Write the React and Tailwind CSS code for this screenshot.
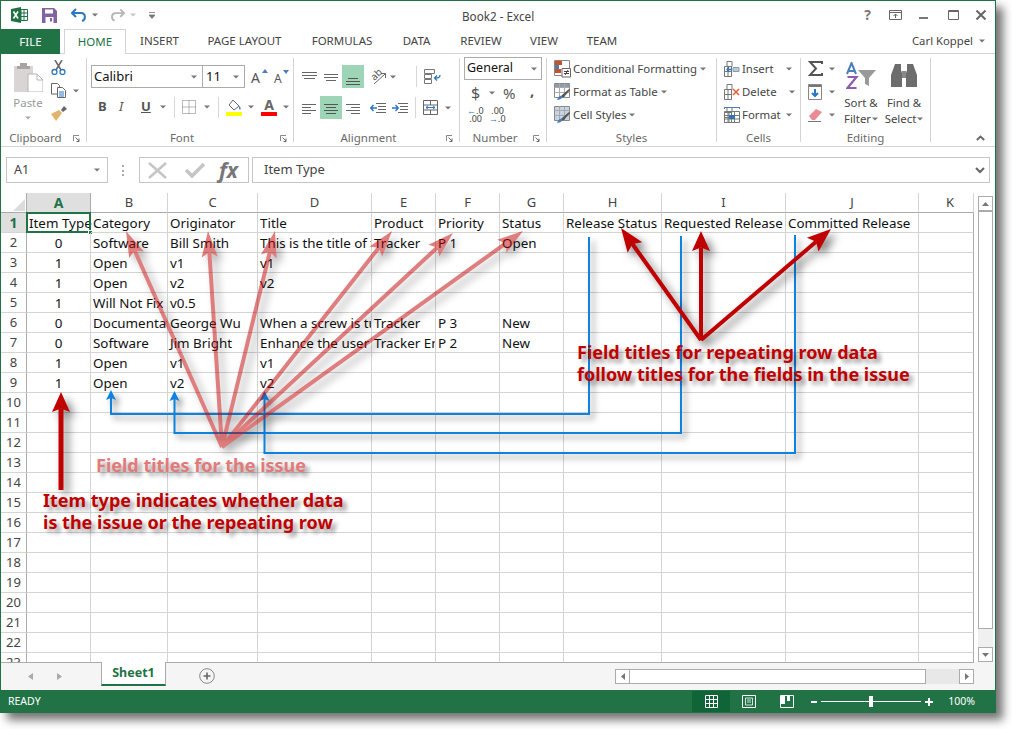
import React from "react";

const Caret = ({ c = "ml-[3px]", color = "#777" }) => (
  <svg width="6" height="4" viewBox="0 0 6 4" className={"shrink-0 " + c}><path d="M0 0.5h6L3 3.5z" fill={color} /></svg>
);
const Ico = ({ w = 16, h = 16, c = "", children }) => (
  <svg width={w} height={h} viewBox={`0 0 ${w} ${h}`} className={"shrink-0 " + c} fill="none">{children}</svg>
);
const Lines = ({ rows, w = 15, h = 15, c = "", color = "#666" }) => (
  <Ico w={w} h={h} c={c}>
    {rows.map(([x1, x2, y], i) => <path key={i} d={`M${x1} ${y}.5H${x2}`} stroke={color} />)}
  </Ico>
);
const Sep = ({ c = "" }) => <div className={"w-px h-[21px] bg-[#d8d8d8] shrink-0 " + c} />;

const Group = ({ w, label, launcher = true, children }) => (
  <div className={"flex flex-col h-[84px] my-[4px] border-r border-[#d4d4d4] shrink-0 " + w}>
    <div className="flex-1 min-h-0">{children}</div>
    <div className={"relative h-[16px] -mb-[4px] leading-[16px] text-[11.5px] text-[#6a6a6a] text-center " + (launcher ? "pr-[16px]" : "")}>
      {label}
      {launcher && (
        <svg width="7" height="7" viewBox="0 0 7 7" className="absolute right-[6px] top-[5px]" fill="none">
          <path d="M0.5 6V0.5H6" stroke="#888" /><path d="M2.5 2.5L6 6M6 3.5V6.5H3.5" stroke="#666" />
        </svg>
      )}
    </div>
  </div>
);

const StyleRow = ({ icon, text, caret = "ml-[3px]" }) => (
  <div className="h-[23px] flex items-center text-[11.4px] text-[#444] whitespace-nowrap">
    {icon}
    <span className="ml-[2px]">{text}</span>
    <Caret c={caret} />
  </div>
);

const CellIcon = ({ kind }) => (
  <Ico w={16} h={16}>
    <path d="M0.5 5.5h7v10h-7zM0.5 10.5h7M4 5.5v10M3 0.5h5v5H3z" stroke="#777" />
    {kind === "insert" && <><path d="M9 6.5h6v4H9z" fill="#b9c9dc" stroke="#8a9bb0" /><path d="M8 8.5H3M5 6L3 8.5 5 11" stroke="#2f75b5" strokeWidth="1.3" /></>}
    {kind === "delete" && <path d="M9 5l6 6M15 5l-6 6" stroke="#e2623a" strokeWidth="1.6" />}
    {kind === "format" && <><path d="M0.5 0.5h15M0.5 0v2M15.5 0v2" stroke="#4a7ebb" /><path d="M0.5 4.5h15v11h-15zM0.5 8.5h15M0.5 12h15M5 4.5v11M10.5 4.5v11" stroke="#777" /><path d="M5 8h6v4H5z" fill="#2f75b5" /></>}
  </Ico>
);

const StyleIcon = ({ kind }) => (
  <Ico w={17} h={18}>
    {kind === "cond" ? (
      <>
        <path d="M0.5 0.5h15v15h-15z" stroke="#888" fill="#fff" />
        <path d="M1 1h7v4H1z" fill="#c8502b" /><path d="M1 5h4v4H1z" fill="#4a7ebb" /><path d="M1 9h6v4H1z" fill="#c8502b" />
        <path d="M8 8.5h8.5v8.5H8z" fill="#fff" stroke="#666" /><path d="M10 11.5h5M10 13.5h5M14 10l-3 5" stroke="#444" />
      </>
    ) : (
      <>
        <path d="M0.5 0.5h15v14h-15z" stroke="#888" fill={kind === "table" ? "#fff" : "#c5d3e4"} />
        {kind === "table" && <path d="M1 1h14v3H1z" fill="#8c9db2" />}
        <path d="M0.5 4.5h15M0.5 9.5h15M5.5 0.5v14M10.5 0.5v14" stroke="#aaa" />
        <path d="M6 15l2-3 7-6 1 1-6 7z" fill="#555" /><path d="M3 17c1-3 3-5 5-4 1 1-1 4-5 4z" fill="#4a7ebb" />
      </>
    )}
  </Ico>
);

const cols = ["A", "B", "C", "D", "E", "F", "G", "H", "I", "J", "K"];
const data = {
  1: ["Item Type", "Category", "Originator", "Title", "Product", "Priority", "Status", "Release Status", "Requested Release", "Committed Release"],
  2: ["0", "Software", "Bill Smith", "This is the title of the issue", "Tracker", "P 1", "Open"],
  3: ["1", "Open", "v1", "v1"],
  4: ["1", "Open", "v2", "v2"],
  5: ["1", "Will Not Fix", "v0.5"],
  6: ["0", "Documentation", "George Wu", "When a screw is turned", "Tracker", "P 3", "New"],
  7: ["0", "Software", "Jim Bright", "Enhance the user interface", "Tracker Enhancements", "P 2", "New"],
  8: ["1", "Open", "v1", "v1"],
  9: ["1", "Open", "v2", "v2"],
};
const rows = Array.from({ length: 23 }, (_, i) => i + 1);
const gridCols = "grid grid-cols-[26px_64px_77px_90px_114px_64px_64px_64px_98px_124px_133px_55px] auto-rows-[20px] w-[973px]";

const Grid = () => (
  <div className={gridCols + " [font-family:'Lato',sans-serif]"}>
    <div className="border-r border-b border-[#ababab] bg-white flex items-end justify-end pr-[1px] pb-[1px]">
      <svg width="12" height="12" viewBox="0 0 12 12"><path d="M12 0v12H0z" fill="#dcdcdc" /></svg>
    </div>
    {cols.map((c, i) => (
      <div key={c} className={"flex items-center justify-center border-r border-b text-[13px] border-b-[#ababab] " + (c === "K" ? "pl-[8px] " : "") + (i === 0 ? "bg-[#dfdfdf] text-[#217346] font-bold border-r-[#ababab] text-[14px]" : "bg-white text-[#444] border-r-[#d4d4d4]")}>{c}</div>
    ))}
    {rows.map((r) => (
      <React.Fragment key={r}>
        <div className={"flex items-center justify-center border-r border-b border-r-[#ababab] border-b-[#d4d4d4] text-[13px] " + (r === 1 ? "bg-[#dfdfdf] text-[#217346] font-bold text-[14px]" : "bg-white text-[#444]")}>{r}</div>
        {cols.map((c, i) => {
          const v = data[r] && data[r][i];
          const last = i === cols.length - 1;
          return (
            <div key={c} className={"relative border-b border-[#d4d4d4] border-r whitespace-nowrap text-[13.4px] leading-[21px] text-[#111] " + (last ? "border-r-[#ababab] " : "") + (r === 1 && i === 0 ? "" : "overflow-hidden ") + (i === 0 && r > 1 ? "text-center" : "pl-[2px]")}>
              {v}
              {r === 1 && i === 0 && (
                <>
                  <div className="absolute -left-px -top-px -right-px -bottom-px border-2 border-[#217346]" />
                  <div className="absolute -right-[3px] -bottom-[3px] w-[5px] h-[5px] bg-[#217346] border border-white" />
                </>
              )}
            </div>
          );
        })}
      </React.Fragment>
    ))}
  </div>
);

const Arrow = ({ x1, y1, x2, y2, w = 4, hl = 24, hw = 8, color }) => {
  const a = Math.atan2(y2 - y1, x2 - x1);
  const ux = Math.cos(a), uy = Math.sin(a);
  const bx = x2 - ux * hl, by = y2 - uy * hl;
  const nx = x2 - ux * hl * 0.82, ny = y2 - uy * hl * 0.82;
  const p = [
    [x2, y2],
    [bx - uy * hw, by + ux * hw],
    [nx, ny],
    [bx + uy * hw, by - ux * hw],
  ].map((q) => q.join(",")).join(" ");
  return (
    <>
      <line x1={x1} y1={y1} x2={nx} y2={ny} stroke={color} strokeWidth={w} />
      <polygon points={p} fill={color} />
    </>
  );
};

const Connector = ({ d, tip }) => (
  <>
    <path d={d} fill="none" stroke="#0f82e0" strokeWidth="2" />
    <polygon points={`${tip[0]},${tip[1]} ${tip[0] - 5},${tip[1] + 10} ${tip[0]},${tip[1] + 8} ${tip[0] + 5},${tip[1] + 10}`} fill="#0f82e0" />
  </>
);

const Overlay = () => (
  <svg width="1012" height="729" viewBox="0 0 1012 729" className="absolute left-0 top-0 pointer-events-none">
    <g className="drop-shadow-[4px_4px_3px_rgba(0,0,0,0.45)]">
      <Connector d="M589 237V414H111V392" tip={[111, 390]} />
      <Connector d="M681 236V433H174.500V393" tip={[174.5, 391]} />
      <Connector d="M795 235V453H264.500V393" tip={[264.5, 391]} />
    </g>
    <g opacity="0.5" className="drop-shadow-[5px_5px_4px_rgba(0,0,0,0.6)]">
      {[[126, 231], [208, 231], [275, 231], [392, 231], [453, 233], [523, 231]].map(([x, y]) => (
        <Arrow key={x} x1={222} y1={447} x2={x} y2={y} w={4} hl={26} hw={8} color="#c00000" />
      ))}
    </g>
    <g className="drop-shadow-[5px_5px_4px_rgba(0,0,0,0.5)]">
      <Arrow x1={701} y1={340} x2={621} y2={228} w={4} hl={24} hw={9} color="#c00000" />
      <Arrow x1={701} y1={340} x2={701} y2={231} w={4} hl={20} hw={9} color="#c00000" />
      <Arrow x1={701} y1={340} x2={831} y2={229} w={4} hl={24} hw={9} color="#c00000" />
      <Arrow x1={61} y1={490} x2={61} y2={392} w={5} hl={20} hw={9} color="#c00000" />
    </g>
  </svg>
);

const Note = ({ c, children }) => (
  <div className={"absolute whitespace-nowrap [font-family:'Liberation_Sans',sans-serif] font-bold text-[18px] leading-[22px] [text-shadow:4px_4px_4px_rgba(0,0,0,0.4)] " + c}>{children}</div>
);

export default function App() {
  return (
    <div className="relative w-[1012px] h-[729px] bg-white overflow-hidden [font-family:'Open_Sans',sans-serif]">
      <div className="w-[996px] h-[713px] flex flex-col border-x border-t border-[#217346] bg-white shadow-[7px_7px_9px_rgba(0,0,0,0.55)]">
        {/* title bar */}
        <div className="h-[28px] flex items-center relative shrink-0">
          <svg width="17" height="16" viewBox="0 0 17 16" className="ml-[10px]">
            <path d="M0 2l10-2v16L0 14z" fill="#207245" />
            <path d="M10 2.500h6.500v11H10z" fill="#fff" stroke="#207245" />
            <path d="M10 6h6M10 9.500h6M13 3v10" stroke="#207245" />
            <path d="M2.500 4.500l4.500 7M7 4.500l-4.500 7" stroke="#fff" strokeWidth="1.600" />
          </svg>
          <svg width="15" height="15" viewBox="0 0 15 15" className="ml-[14px]">
            <path d="M0 0h12l3 3v12H0z" fill="#8064a2" />
            <path d="M3 1.500h8v4H3z" fill="#fff" /><path d="M3.500 9h8v6h-8z" fill="#fff" /><path d="M8 10h2v3.500H8z" fill="#8064a2" />
          </svg>
          <svg width="16" height="14" viewBox="0 0 16 14" className="ml-[14px]" fill="none">
            <path d="M5 1L1 5l4 4" stroke="#2b78c0" strokeWidth="2" /><path d="M1.500 5H10c5 0 5 7 1 8" stroke="#2b78c0" strokeWidth="2" />
          </svg>
          <Caret c="ml-[5px]" />
          <svg width="15" height="14" viewBox="0 0 16 14" className="ml-[12px]" fill="none">
            <path d="M11 1l4 4-4 4" stroke="#b5b5b5" strokeWidth="2" /><path d="M14.500 5H6c-5 0-5 7-1 8" stroke="#b5b5b5" strokeWidth="2" />
          </svg>
          <Caret c="ml-[5px]" color="#c5c5c5" />
          <svg width="6" height="7" viewBox="0 0 6 7" className="ml-[13px]"><path d="M0 .5h6M0 3h6L3 6.500z" stroke="#777" fill="#777" strokeWidth=".8" /></svg>
          <div className="absolute left-[461px] top-[6px] text-[11.7px] leading-[18px] text-[#444]">Book2 - Excel</div>
          <div className="ml-auto flex items-center">
            <span className="text-[14px] font-bold text-[#777] mr-[18px] leading-none">?</span>
            <svg width="13" height="10" viewBox="0 0 13 10" className="mr-[17px]" fill="none"><path d="M.5.5h12v9H.5zM.5 2.500h12" stroke="#666" /><path d="M6.500 8V4M4.500 6l2-2 2 2" stroke="#666" /></svg>
            <div className="w-[9px] h-[2px] bg-[#777] mr-[20px] mt-[5px]" />
            <svg width="11" height="10" viewBox="0 0 11 10" className="mr-[17px]" fill="none"><path d="M.5.5h10v9H.5z" stroke="#666" /><path d="M.5 1.500h10" stroke="#666" /></svg>
            <svg width="10" height="10" viewBox="0 0 10 10" className="mr-[9px]" fill="none"><path d="M.5.5l9 9M9.500.5l-9 9" stroke="#666" strokeWidth="2" /></svg>
          </div>
        </div>
        {/* tabs */}
        <div className="h-[25px] flex border-b border-[#d4d4d4] shrink-0 text-[11.5px] text-[#444]">
          <div className="w-[59px] h-[25px] bg-[#217346] text-white flex items-center justify-center">FILE</div>
          <div className="ml-[4px] w-[62px] h-[25px] bg-white border-x border-t border-[#d4d4d4] text-[#217346] flex items-center justify-center">HOME</div>
          {[["INSERT", "w-[37px] ml-[15px]"], ["PAGE LAYOUT", "w-[75px] ml-[29px]"], ["FORMULAS", "w-[62px] ml-[29px]"], ["DATA", "w-[29px] ml-[29px]"], ["REVIEW", "w-[40px] ml-[30px]"], ["VIEW", "w-[28px] ml-[29px]"], ["TEAM", "w-[32px] ml-[28px]"]].map(([t, c]) => (
            <div key={t} className={"flex items-center justify-center whitespace-nowrap " + c}>{t}</div>
          ))}
          <div className="ml-auto flex items-center mr-[10px] text-[11.3px]">
            <span>Carl Koppel</span><Caret c="ml-[6px]" />
          </div>
        </div>
        {/* ribbon */}
        <div className="h-[93px] flex border-b border-[#d4d4d4] shrink-0">
          <Group w="w-[86px]" label="Clipboard">
            <div className="flex pl-[11px]">
              <div className="w-[32px] flex flex-col items-center">
                <svg width="30" height="30" viewBox="0 0 30 30" className="mt-[4px]">
                  <path d="M1 4h19v26H1z" fill="#d9d5d5" /><path d="M7 1h7v3h3v3H4V4h3z" fill="#a8a4a4" />
                  <path d="M15 12h9l6 6v12H15z" fill="#fff" stroke="#b5b5b5" /><path d="M24 12v6h6" fill="none" stroke="#b5b5b5" />
                </svg>
                <div className="text-[11.4px] text-[#999] leading-[14px] mt-[4px]">Paste</div>
                <Caret c="mt-[6px]" color="#aaa" />
              </div>
              <div className="ml-[7px] flex flex-col">
                <Ico w={15} h={15} c="mt-[2px]"><path d="M4 0l6 10M11 0L5 10" stroke="#666" strokeWidth="1.500" /><circle cx="3.500" cy="12" r="2.500" stroke="#2b78c0" strokeWidth="1.300" /><circle cx="11.500" cy="12" r="2.500" stroke="#2b78c0" strokeWidth="1.300" /></Ico>
                <div className="flex items-center mt-[8px]">
                  <Ico w={16} h={15}><path d="M.5.5h6l2 2V11H.5z" stroke="#666" fill="#fff" /><path d="M6.500 4.500h5l3 3v7h-8z" stroke="#666" fill="#fff" /><path d="M8 9h5M8 11h5M8 13h5" stroke="#2b78c0" /></Ico>
                  <Caret c="ml-[6px]" />
                </div>
                <Ico w={16} h={15} c="mt-[8px]"><path d="M10 4l3-4 3 3-4 3z" fill="#666" /><path d="M0 8l5 7 6-8-3-3z" fill="#e2b36b" /></Ico>
              </div>
            </div>
          </Group>
          <Group w="w-[207px]" label="Font">
            <div className="pl-[4px] pt-[7px]">
              <div className="flex h-[23px] items-center">
                <div className="w-[112px] h-[23px] border border-[#ababab] flex items-center pl-[2px] pr-[5px] justify-between text-[13px] [font-family:'Lato',sans-serif] text-[#111]">Calibri<Caret /></div>
                <div className="w-[43px] h-[23px] -ml-px border border-[#ababab] flex items-center pl-[3px] pr-[5px] justify-between text-[13px] [font-family:'Lato',sans-serif] text-[#111]">11<Caret /></div>
                <div className="relative ml-[6px] w-[14px] text-[14px] text-[#555] leading-none mt-[3px]">A<svg width="6" height="4" className="absolute -right-[3px] -top-[2px]"><path d="M0 4h6L3 0z" fill="#4a7ebb" /></svg></div>
                <div className="relative ml-[9px] w-[12px] text-[12px] text-[#555] leading-none mt-[5px]">A<svg width="6" height="4" className="absolute -right-[3px] -top-[3px]"><path d="M0 0h6L3 4z" fill="#4a7ebb" /></svg></div>
              </div>
              <div className="flex items-center h-[20px] mt-[9px] text-[#555] text-[13px]">
                <span className="ml-[7px] w-[10px] font-bold [font-family:'Liberation_Sans',sans-serif]">B</span>
                <span className="ml-[11px] w-[10px] italic [font-family:'Liberation_Serif',serif]">I</span>
                <span className="ml-[12px] w-[10px] underline font-bold [font-family:'Liberation_Sans',sans-serif]">U</span>
                <Caret c="ml-[9px]" />
                <Sep c="ml-[8px]" />
                <Ico w={14} h={14} c="ml-[7px]"><path d="M.5.5h13v13H.5zM.5 7h13M7 .5v13" stroke="#777" strokeDasharray="1 1" /></Ico>
                <Caret c="ml-[8px]" />
                <Sep c="ml-[8px]" />
                <div className="ml-[7px] w-[16px] flex flex-col items-center">
                  <Ico w={14} h={12}><path d="M6 1l6 6-5 4-5-5z" stroke="#666" fill="#fff" /><path d="M12 7c2 1 2 3 1 4-1-1-1-2-1-4z" fill="#2b78c0" /></Ico>
                  <div className="w-[16px] h-[4px] bg-[#ffff00] mt-[1px]" />
                </div>
                <Caret c="ml-[6px]" />
                <div className="ml-[7px] w-[16px] flex flex-col items-center">
                  <span className="text-[14px] leading-[12px] text-[#666] font-bold [font-family:'Liberation_Sans',sans-serif]">A</span>
                  <div className="w-[16px] h-[4px] bg-[#ff0000] mt-[1px]" />
                </div>
                <Caret c="ml-[6px]" />
              </div>
            </div>
          </Group>
          <Group w="w-[166px]" label="Alignment">
            <div className="pl-[8px] pt-[7px]">
              <div className="flex items-center h-[23px]">
                <Lines rows={[[0, 15, 3], [0, 15, 6], [2, 13, 9]]} />
                <Lines c="ml-[7px]" w={14} rows={[[0, 14, 5], [0, 14, 8], [2, 12, 11]]} />
                <div className="ml-[4px] w-[22px] h-[23px] bg-[#9fd5b7] flex items-end justify-center pb-[3px]"><Lines w={14} h={8} rows={[[2, 12, 1], [0, 14, 4], [0, 14, 7]]} color="#555" /></div>
                <div className="relative w-[16px] h-[16px] ml-[6px] shrink-0">
                  <span className="absolute left-0 top-[-1px] text-[10px] leading-[12px] text-[#555] -rotate-45">ab</span>
                  <svg width="16" height="16" viewBox="0 0 16 16" className="absolute left-0 top-0" fill="none"><path d="M4 15L15 5M11 4.500h4.500V9" stroke="#666" /></svg>
                </div>
                <Caret c="ml-[4px]" />
                <Sep c="ml-[20px]" />
                <Ico w={17} h={16} c="ml-[7px]"><path d="M.5.500h10v4h-10zM.5 5.500h7v4h-7zM.5 10.500h7v4h-7z" stroke="#777" /><path d="M16 6c0 3-2 3-5 3M13 6.500L10.500 9l2.500 2.500" stroke="#2b78c0" strokeWidth="1.300" /></Ico>
              </div>
              <div className="flex items-center h-[23px] mt-[8px]">
                <Lines w={14} h={12} rows={[[0, 14, 2], [0, 9, 5], [0, 14, 8], [0, 9, 11]]} />
                <div className="ml-[4px] w-[22px] h-[23px] bg-[#9fd5b7] flex items-center justify-center"><Lines w={14} h={12} color="#555" rows={[[0, 14, 2], [2, 12, 5], [0, 14, 8], [2, 12, 11]]} /></div>
                <Lines c="ml-[4px]" w={14} h={12} rows={[[0, 14, 2], [5, 14, 5], [0, 14, 8], [5, 14, 11]]} />
                <Ico w={16} h={12} c="ml-[10px]"><path d="M6 1.500h10M8 4.500h8M8 7.500h8M6 10.500h10" stroke="#666" /><path d="M7 6H1M3.500 3L.8 6l2.700 3" stroke="#2b78c0" strokeWidth="1.400" /></Ico>
                <Ico w={16} h={12} c="ml-[6px]"><path d="M6 1.500h10M8 4.500h8M8 7.500h8M6 10.500h10" stroke="#666" /><path d="M0 6h6M3.500 3l2.700 3-2.700 3" stroke="#2b78c0" strokeWidth="1.400" /></Ico>
                <Sep c="ml-[7px]" />
                <Ico w={15} h={15} c="ml-[7px]"><path d="M.5.5h14v14H.5zM.5 5h14M.5 10h14M7.500.5V5M7.500 10v4.500" stroke="#666" /><path d="M3 7.500h9M5 5.800L3 7.500l2 1.700M10 5.800l2 1.700-2 1.700" stroke="#2b78c0" /></Ico>
                <Caret c="ml-[7px]" />
              </div>
            </div>
          </Group>
          <Group w="w-[87px]" label="Number">
            <div className="pl-[4px] -mt-px">
              <div className="w-[78px] h-[23px] border border-[#ababab] flex items-center justify-between pl-[2px] pr-[4px] text-[12.5px] [font-family:'Lato',sans-serif] text-[#111]">General<Caret /></div>
              <div className="flex items-center h-[20px] mt-[3px] text-[#555]">
                <span className="ml-[7px] w-[10px] text-[16px] leading-none">$</span>
                <Caret c="ml-[8px]" />
                <span className="ml-[8px] w-[14px] text-[15px] leading-none">%</span>
                <span className="ml-[13px] text-[15px] font-bold leading-none -mt-[5px]">,</span>
              </div>
              <div className="flex mt-[4px] ml-[3px] text-[9px] leading-[8px] text-[#444] [font-family:'Liberation_Sans',sans-serif]">
                <div className="w-[15px] text-right whitespace-nowrap"><span className="text-[#2b78c0]">←</span>.0<br />.00</div>
                <div className="w-[15px] ml-[7px] text-right whitespace-nowrap">.00<br /><span className="text-[#2b78c0]">→</span>.0</div>
              </div>
            </div>
          </Group>
          <Group w="w-[170px]" label="Styles" launcher={false}>
            <div className="pl-[7px] -mt-px">
              <StyleRow icon={<StyleIcon kind="cond" />} text="Conditional Formatting" />
              <StyleRow icon={<StyleIcon kind="table" />} text="Format as Table" />
              <StyleRow icon={<StyleIcon kind="cell" />} text="Cell Styles" />
            </div>
          </Group>
          <Group w="w-[84px]" label="Cells" launcher={false}>
            <div className="pl-[7px] -mt-px">
              <StyleRow icon={<CellIcon kind="insert" />} text="Insert" caret="ml-[12px]" />
              <StyleRow icon={<CellIcon kind="delete" />} text="Delete" caret="ml-[12px]" />
              <StyleRow icon={<CellIcon kind="format" />} text="Format" caret="ml-[5px]" />
            </div>
          </Group>
          <Group w="w-[130px]" label="Editing" launcher={false}>
            <div className="flex pl-[7px]">
              <div className="w-[30px] -mt-px">
                <div className="h-[23px] flex items-center">
                  <Ico w={15} h={15}><path d="M14 3V1H2l6 6.500L2 14h12v-2" stroke="#555" strokeWidth="2" /></Ico>
                  <Caret c="ml-[6px]" />
                </div>
                <div className="h-[23px] flex items-center">
                  <Ico w={14} h={16}><path d="M.5.5h13v15H.5z" stroke="#888" fill="#fff" /><path d="M1 1h12v2H1z" fill="#777" /><path d="M7 5v7M4 9l3 3 3-3" stroke="#2b78c0" strokeWidth="2" /></Ico>
                  <Caret c="ml-[7px]" />
                </div>
                <div className="h-[23px] flex items-center">
                  <Ico w={15} h={14}><path d="M1 8l7-7 6 3-7 8H4z" fill="#ea8a95" /><path d="M0 13.500h13" stroke="#777" /></Ico>
                  <Caret c="ml-[6px]" />
                </div>
              </div>
              <div className="w-[34px] ml-[6px] flex flex-col items-center text-[11.4px] text-[#444] leading-[16px] whitespace-nowrap">
                <svg width="31" height="28" viewBox="0 0 31 28" className="mt-[4px] shrink-0" fill="none">
                  <path d="M1 12L5.500 1 10 12M2.500 9h6" stroke="#4a7ebb" strokeWidth="2" />
                  <path d="M1.500 15h9l-9 11h9" stroke="#8e5db0" strokeWidth="2.200" />
                  <path d="M12 8h18l-7 8v8l-4-2v-6z" fill="#999" />
                </svg>
                <div className="mt-[5px]">Sort &amp;</div>
                <div className="flex items-center">Filter<Caret c="ml-[1px]" /></div>
              </div>
              <div className="w-[36px] ml-[8px] flex flex-col items-center text-[11.4px] text-[#444] leading-[16px] whitespace-nowrap">
                <svg width="26" height="23" viewBox="0 0 26 23" className="mt-[6px] shrink-0">
                  <path d="M4 0h6v6l1 3v14H0V11zM16 0h6l4 11v12H15V9l1-3z" fill="#6d6d6d" /><path d="M11 7h4v7h-4z" fill="#8a8a8a" />
                </svg>
                <div className="mt-[8px]">Find &amp;</div>
                <div className="flex items-center">Select<Caret c="ml-[1px]" /></div>
              </div>
            </div>
          </Group>
          <div className="flex-1 flex justify-end items-end pr-[10px] pb-[5px]">
            <svg width="9" height="6" viewBox="0 0 9 6" fill="none"><path d="M.8 5L4.500 1.500 8.200 5" stroke="#666" strokeWidth="1.800" /></svg>
          </div>
        </div>
        {/* formula bar */}
        <div className="h-[46px] shrink-0 flex items-center pl-[5px] pr-[5px]">
          <div className="w-[102px] h-[26px] border border-[#c6c6c6] flex items-center justify-between pl-[7px] pr-[7px] text-[12.5px] text-[#444]">A1<Caret color="#777" /></div>
          <div className="w-[2px] h-[11px] ml-[14px] border-l-2 border-dotted border-[#aaa]" />
          <div className="w-[110px] h-[26px] ml-[15px] border border-[#c6c6c6] flex items-center">
            <svg width="19" height="17" viewBox="0 0 19 17" className="ml-[8px]" fill="none"><path d="M1 1l17 15M18 1L1 16" stroke="#c5c5c5" strokeWidth="2.500" /></svg>
            <svg width="20" height="16" viewBox="0 0 20 16" className="ml-[18px]" fill="none"><path d="M1 8l6 6L19 2" stroke="#c5c5c5" strokeWidth="3.500" /></svg>
            <span className="ml-[14px] text-[21px] italic font-bold leading-none [font-family:'Liberation_Serif',serif] text-[#777]">fx</span>
          </div>
          <div className="flex-1 h-[26px] ml-[3px] border border-[#c6c6c6] flex items-center justify-between pl-[11px] pr-[4px] text-[13px] text-[#444]">
            <span>Item Type</span>
            <svg width="10" height="7" viewBox="0 0 10 7" fill="none"><path d="M1 1l4 4 4-4" stroke="#666" strokeWidth="2" /></svg>
          </div>
        </div>
        {/* sheet */}
        <div className="h-[469px] shrink-0 flex overflow-hidden">
          <Grid />
          <div className="w-[15px] ml-[4px] mt-[3px] flex flex-col h-[466px]">
            <div className="h-[15px] border border-[#ababab] flex items-center justify-center shrink-0"><svg width="7" height="4"><path d="M0 4h7L3.500 0z" fill="#777" /></svg></div>
            <div className="h-[418px] border border-t-[#ababab] border-x-[#ababab] border-b-[#ababab] bg-white shrink-0" />
            <div className="flex-1 bg-[#f0f0f0]" />
            <div className="h-[15px] border border-[#ababab] flex items-center justify-center shrink-0"><svg width="7" height="4"><path d="M0 0h7L3.500 4z" fill="#777" /></svg></div>
          </div>
        </div>
        {/* sheet tabs */}
        <div className="h-[28px] shrink-0 flex bg-[#f5f5f5]">
          <div className="w-[100px] h-[28px] border-t border-[#ababab] flex items-center pl-[27px] shrink-0">
            <svg width="5" height="7"><path d="M5 0v7L0 3.500z" fill="#aaa" /></svg>
            <svg width="5" height="7" className="ml-[24px]"><path d="M0 0v7l5-3.500z" fill="#aaa" /></svg>
          </div>
          <div className="w-[65px] h-[24px] bg-white border-x border-b-2 border-x-[#ababab] border-b-[#217346] flex items-center justify-center text-[12.5px] font-bold text-[#217346] [font-family:'Lato',sans-serif] shrink-0">Sheet1</div>
          <div className="w-[449px] border-t border-[#ababab] shrink-0 pl-[33px] pt-[5px]">
            <svg width="16" height="16" viewBox="0 0 16 16" fill="none"><circle cx="8" cy="8" r="7.300" stroke="#888" /><path d="M8 4.500v7M4.500 8h7" stroke="#666" strokeWidth="1.600" /></svg>
          </div>
          <div className="w-[359px] h-[28px] border-t border-[#ababab] pt-[6px] flex shrink-0">
            <div className="w-[15px] h-[15px] border border-[#ababab] bg-white flex items-center justify-center"><svg width="4" height="7"><path d="M4 0v7L0 3.500z" fill="#777" /></svg></div>
            <div className="w-[297px] h-[15px] border border-[#ababab] bg-white -ml-px" />
            <div className="flex-1 h-[15px] bg-[#e8e8e8]" />
            <div className="w-[15px] h-[15px] border border-[#ababab] bg-white flex items-center justify-center"><svg width="4" height="7"><path d="M0 0v7l4-3.500z" fill="#777" /></svg></div>
          </div>
        </div>
        {/* status bar */}
        <div className="h-[23px] shrink-0 bg-[#217346] flex items-center text-white text-[10.5px] pl-[7px]">
          <span>READY</span>
          <div className="ml-auto w-[38px] h-[21px] bg-[#0f6537] flex items-center justify-center">
            <svg width="13" height="13" viewBox="0 0 13 13" fill="none"><path d="M.5.5h12v12H.5zM.5 4.500h12M.5 8.500h12M4.500.5v12M8.500.5v12" stroke="#fff" /></svg>
          </div>
          <svg width="14" height="13" viewBox="0 0 14 13" className="ml-[12px]" fill="none"><path d="M.5.5h13v12H.5z" stroke="#fff" /><path d="M3.500 3h7v7h-7zM5 5h4M5 7h4" stroke="#fff" strokeWidth=".8" /></svg>
          <svg width="14" height="13" viewBox="0 0 14 13" className="ml-[24px]" fill="none"><path d="M.5.5h13v12H.5z" stroke="#fff" /><path d="M1 1h4v8H1zM7 1h3v5H7z" fill="#fff" /></svg>
          <div className="w-[6px] h-[2px] bg-white ml-[17px]" />
          <div className="relative w-[100px] h-px bg-white ml-[4px]">
            <div className="absolute left-[48px] -top-[5px] w-[4px] h-[11px] bg-white" />
          </div>
          <svg width="8" height="8" className="ml-[4px]"><path d="M0 3h8v2H0zM3 0h2v8H3z" fill="#fff" /></svg>
          <span className="ml-[15px] mr-[20px] text-[10.5px]">100%</span>
        </div>
      </div>
      <Overlay />
      <Note c="left-[96px] top-[454px] text-[#e27a7a]">Field titles for the issue</Note>
      <Note c="left-[43px] top-[489px] text-[#c00000]">Item type indicates whether data<br />is the issue or the repeating row</Note>
      <Note c="left-[577px] top-[341px] text-[#c00000]">Field titles for repeating row data<br />follow titles for the fields in the issue</Note>
    </div>
  );
}
